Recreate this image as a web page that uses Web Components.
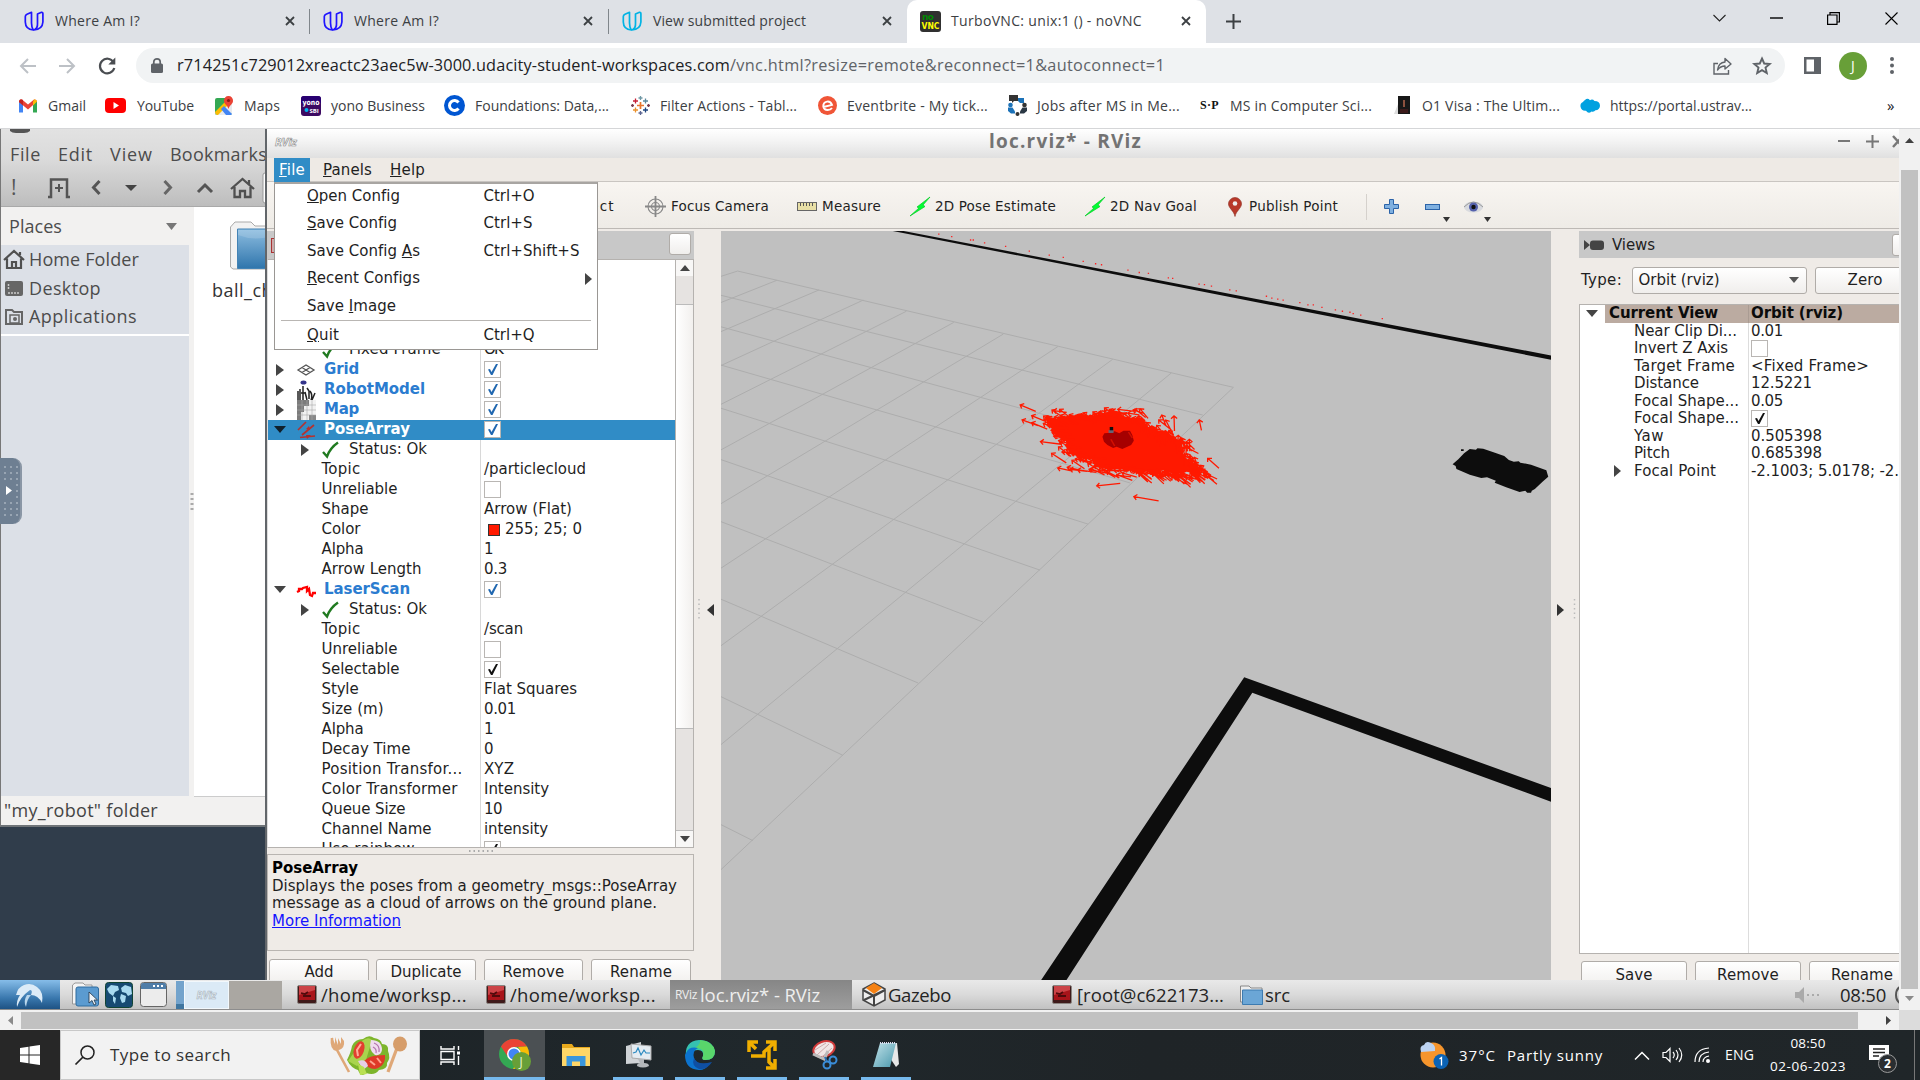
<!DOCTYPE html>
<html lang="en">
<head>
<meta charset="utf-8">
<title>TurboVNC: unix:1 () - noVNC</title>
<style>
html,body{margin:0;padding:0;width:1920px;height:1080px;overflow:hidden}
body{font-family:"Open Sans","Noto Sans",sans-serif;font-size:14px;color:#3c4043}
</style>
</head>
<body>
<app-screen></app-screen>
<script>
const BASE = `*{box-sizing:border-box}
:host{display:block;flex:none}
.c{display:flex;flex:none;align-items:center}
.row{display:flex;align-items:center}
svg{display:block;flex:none;overflow:visible}`;
const def = (name, css, html, after) => customElements.define(name, class extends HTMLElement {
  connectedCallback() {
    if (this.shadowRoot) return;
    const t = document.createElement('template');
    t.innerHTML = `<style>${BASE}${css}</style>${typeof html === 'function' ? html(this) : html}`;
    this.attachShadow({ mode: 'open' }).append(t.content.cloneNode(true));
    if (after) after(this);
  }
});
/* Lays items [start, width, markup] along a row, turning gaps into margins. */
const flow = (items, c = 0) => items.map(([x, w, h]) => {
  const m = x - c; c = x + w;
  return `<span class="c" style="margin-left:${m}px;width:${w}px">${h}</span>`;
}).join('');
const t = (x, w, s, css = '') => [x, w, `<fit-text w="${w}" style="${css}">${s}</fit-text>`];
const svg = (w, h, body, vb, css = '') => `<svg width="${w}" height="${h}" viewBox="${vb || `0 0 ${w} ${h}`}" style="${css}">${body}</svg>`;
const ic = (x, w, h, body, vb, css) => [x, w, svg(w, h, body, vb, css)];

/* Text whose letter spacing is tuned so that it fills the width w. */
def('fit-text', `:host{display:inline-block;white-space:nowrap;line-height:1.25;overflow:visible}span{display:inline-block}`,
  '<span><slot></slot></span>', el => {
    const w = +el.getAttribute('w');
    if (!w) return;
    el.style.width = w + 'px';
    const nat = el.shadowRoot.querySelector('span').getBoundingClientRect().width;
    const n = el.textContent.trim().length;
    el.style.letterSpacing = ((w - nat) / n).toFixed(3) + 'px';
  });

/* ---------- browser ---------- */
const udacity = c => `<g fill="none" stroke="${c}" stroke-width="1.7" stroke-linejoin="round"><path d="M7.5 12V1.3L3 3.2Q1.3 4 1.3 5.5V11q.2 7.5 8 8Q7.5 16 7.5 12Z"/><path d="M13.5 12V3l4-1.7q1.4-.2 1.4 1.4V11q-.5 7.5-9 8 4-1.2 3.6-7Z"/></g>`;
const cross = `<path d="M1 1L9 9M9 1L1 9" stroke="#3c4043" stroke-width="1.8"/>`;
def('browser-tabs', `:host{height:43px;background:#dee1e6}
.row{height:43px;align-items:stretch}
.tab{display:flex;align-items:center;flex:none;height:43px;padding-bottom:1px}
.tab.on{background:#fff;border-radius:10px 10px 0 0;height:43px}
.sep{width:1px;height:25px;background:#80868b;align-self:center;flex:none}`,
  `<div class="row">
  <div class="tab" style="width:309px">${flow([ic(24,21,20,udacity('#2015ff')),t(55,85,'Where Am I?'),ic(285,10,10,cross)])}</div><div class="sep"></div>
  <div class="tab" style="width:298px">${flow([ic(323,21,20,udacity('#2015ff')),t(354,85,'Where Am I?'),ic(583,10,10,cross)],310)}</div><div class="sep"></div>
  <div class="tab" style="width:298px">${flow([ic(622,21,20,udacity('#02b3e4')),t(653,153,'View submitted project'),ic(882,10,10,cross)],609)}</div>
  <div class="tab on" style="width:299px">${flow([ic(920,21,21,`<rect width="21" height="21" rx="3" fill="#303030"/><text x="2" y="9" font-family="DejaVu Sans" font-weight="bold" font-size="9" fill="#008a00" textLength="12">no</text><text x="1.5" y="17.5" font-family="DejaVu Sans" font-weight="bold" font-size="8" fill="#ffff00" textLength="18" lengthAdjust="spacingAndGlyphs">VNC</text>`),t(951,191,'TurboVNC: unix:1 () - noVNC'),ic(1181,10,10,cross)],907)}</div>
  <div class="tab">${flow([ic(1226,15,15,'<path d="M7.5 0V15M0 7.5H15" stroke="#3c4043" stroke-width="2"/>'),
   ic(1713,13,8,'<path d="M.5 1L6.5 7L12.5 1" fill="none" stroke="#222" stroke-width="1.1"/>','', 'margin-bottom:6px'),
   ic(1770,13,2,'<path d="M0 1H13" stroke="#000" stroke-width="1.4"/>','', 'margin-bottom:6px'),
   ic(1827,13,13,'<path d="M.6 3H10V12.4H.6ZM3 3V.6H12.4V10H10" fill="none" stroke="#000" stroke-width="1.2"/>','','margin-bottom:6px'),
   ic(1885,13,13,'<path d="M.5 .5L12.5 12.5M12.5 .5L.5 12.5" stroke="#000" stroke-width="1.1"/>','','margin-bottom:6px')],1206)}</div></div>`);

def('browser-toolbar', `:host{height:43px;background:#fff}
.row{height:45px;padding-top:0}.omni{display:flex;align-items:center;width:1649px;height:35px;border-radius:18px;background:#f1f3f4;flex:none;margin-left:18px}
.j{width:28px;height:28px;border-radius:50%;background:#689f38;color:#fff;display:grid;place-items:center;font-size:14px}`,
  `<div class="row">${flow([
    ic(19,17,16,'<path d="M17 8H2M9 1L2 8l7 7" fill="none" stroke="#bdc1c6" stroke-width="2"/>'),
    ic(59,17,16,'<path d="M0 8H15M8 1l7 7-7 7" fill="none" stroke="#bdc1c6" stroke-width="2"/>'),
    ic(98,19,18,'<path d="M15.5 5.2A7.3 7.3 0 1 0 16.3 11" fill="none" stroke="#4a4d51" stroke-width="2.2"/><path d="M17.3 .5V7.5H10.3Z" fill="#4a4d51"/>')])}
   <div class="omni" style="margin-left:19px">${flow([
    ic(151,12,15,'<rect y="5.5" width="12" height="9.5" rx="1.5" fill="#5f6368"/><path d="M2.8 6V3.8a3.2 3 0 0 1 6.4 0V6" fill="none" stroke="#5f6368" stroke-width="1.7"/>'),
    t(177,553,'r714251c729012xreactc23aec5w-3000.udacity-student-workspaces.com','color:#202124;font-size:16.3px'),
    t(730,435,'/vnc.html?resize=remote&amp;reconnect=1&amp;autoconnect=1','color:#5f6368;font-size:16.3px'),
    ic(1713,19,18,'<path d="M5 6.5H1V17H15.5V13" fill="none" stroke="#5f6368" stroke-width="1.4"/><path d="M4.5 13Q5.5 5.5 12 5V1.5L18 7 12 12V9Q7.500 9 4.500 13Z" fill="none" stroke="#5f6368" stroke-width="1.4" stroke-linejoin="round"/>'),
    ic(1753,18,18,'<path d="M9 1.5l2.2 5 5.5.5-4.2 3.6 1.3 5.4L9 13.2 4.200 16 5.500 10.600 1.300 7l5.500-.5Z" fill="none" stroke="#5f6368" stroke-width="1.9"/>')],136)}</div>
   ${flow([
    ic(1804,17,17,'<rect width="17" height="17" fill="#5f6368"/><rect x="2.500" y="2.500" width="7.500" height="12" fill="#fff"/>'),
    [1839,28,'<div class="j"><span>J</span></div>'],
    ic(1890,4,17,'<g fill="#5f6368"><circle cx="2" cy="2" r="2"/><circle cx="2" cy="8.500" r="2"/><circle cx="2" cy="15" r="2"/></g>')],1785)}
  </div>`);

const bm = (x, w, s) => t(x, w, s, 'font-size:14px');
def('bookmark-bar', `:host{height:43px;background:#fff;border-bottom:1px solid #d5d6d8}.row{height:39px}`,
  `<div class="row">${flow([
   ic(19,18,14,'<path d="M0 2V13.500H4V6Z" fill="#4285f4"/><path d="M18 2V13.500H14V6Z" fill="#34a853"/><path d="M0 2Q1 0 3 .5L9 5.500 15 .5Q17.500 0 18 2.500L9 10.500 0 3Z" fill="#ea4335"/><path d="M14 3l1-2.500q2.500-.5 3 2L14 6.500Z" fill="#fbbc04"/><path d="M0 3L4 6.500V1Q0 -1 0 3Z" fill="#c5221f"/>'), bm(48,38,'Gmail'),
   ic(105,21,15,'<rect width="21" height="15" rx="4" fill="#f00"/><path d="M8.500 4v7l5.500-3.500Z" fill="#fff"/>'), bm(137,57,'YouTube'),
   ic(215,19,19,'<rect y="2" width="17" height="17" rx="2" fill="#34a853"/><path d="M0 17L15 3l2 2v12q0 2-2 2H2Z" fill="#e8eaed"/><path d="M0 16L13 3l3 3L3 19H2q-2-1-2-3Z" fill="#fbbc04"/><path d="M9 10l8 8-1 1H11L6 13Z" fill="#4285f4"/><path d="M13.500 0a4.500 4.500 0 0 1 4.500 5c0 3-3.500 4-4.500 8-1-4-4.500-5-4.500-8a4.500 4.500 0 0 1 4.500-5Z" fill="#ea4335"/><circle cx="13.500" cy="4.500" r="1.600" fill="#8c1a11"/>'), bm(244,36,'Maps'),
   ic(301,20,20,'<rect width="20" height="20" rx="3" fill="#3c0a62"/><path d="M0 3q0-3 3-3h14q3 0 3 3v4H0Z" fill="#280071"/><text x="1.500" y="9" fill="#fff" font-family="DejaVu Sans" font-weight="bold" font-size="7.500" textLength="17" lengthAdjust="spacingAndGlyphs">yono</text><circle cx="5.500" cy="14" r="2" fill="#00b5ef"/><text x="8.500" y="16.500" fill="#fff" font-size="6" font-family="Open Sans" font-weight="bold">SBI</text>'), bm(331,94,'yono Business'),
   ic(444,21,21,'<circle cx="10.500" cy="10.500" r="10.500" fill="#0056d2"/><path d="M14.500 7.500A5 5 0 1 0 14.500 13.500" fill="none" stroke="#fff" stroke-width="3"/>'), bm(475,134,'Foundations: Data,...'),
   ic(631,19,19,'<g fill="none" stroke-width="1.300"><path d="M9.500 6v7M6 9.500h7" stroke="#e8762d" stroke-width="1.700"/><path d="M4.500 2.500v5M2 5h5" stroke="#c72037"/><path d="M14.500 2.500v5M12 5h5" stroke="#5b879b"/><path d="M4.500 11.500v5M2 14h5" stroke="#eb912c"/><path d="M14.500 11.500v5M12 14h5" stroke="#1f457e"/><path d="M9.500 0v4M7.500 2h4" stroke="#7099a6"/><path d="M9.500 15v4M7.500 17h4" stroke="#5c6692"/><path d="M1.500 8v3M0 9.500h3M17.500 8v3M16 9.500h3" stroke="#7b3f50"/></g>'), bm(660,137,'Filter Actions - Tabl...'),
   ic(818,19,19,'<circle cx="9.500" cy="9.500" r="9.500" fill="#f05537"/><path d="M5.500 11L14 8.800Q12.500 5 9 5.600 5 6.500 5.300 10.500 6 14 9.700 14q2.800 0 4.300-2" fill="none" stroke="#fff" stroke-width="1.900"/>'), bm(847,141,'Eventbrite - My tick...'),
   ic(1007,21,21,'<path d="M2 0h9v6H7l-2 2V6H2Z" fill="#333"/><path d="M11 3h6v5h-4l-2-2Z" fill="#1c72b8"/><circle cx="3.500" cy="10" r="2.300" fill="#1c72b8"/><circle cx="17.500" cy="10" r="2.300" fill="#333"/><path d="M1 12.500h4.500l2.500 4v2H4L1 16Z" fill="#1c72b8"/><path d="M20 12.500h-4.500l-2.500 4v2h4l3-2.500Z" fill="#2a3744"/><circle cx="10.500" cy="19" r="2" fill="#333"/>'), bm(1037,143,'Jobs after MS in Me...'),
   t(1200,19,'S·P','font:bold 12px \'Liberation Serif\',serif;color:#111'), bm(1230,142,'MS in Computer Sci...'),
   ic(1394,16,19,'<path d="M4 0h12v18H4Z" fill="#181818"/><path d="M0 18L4 8V18Z" fill="#ddd"/><path d="M10 4v7" stroke="#b5654b" stroke-width="1.500"/><path d="M6 13h8v4H6Z" fill="#3c1a1a"/>'), bm(1422,138,'O1 Visa : The Ultim...'),
   ic(1580,20,15,'<path d="M5 2Q7.500-.5 10 2.200 12.500.5 14.500 3 20 3 20 8q-.5 4-4.500 4.300-1.500 2-4 1.200-3 3-5.500-.8-4.500.5-5.500-4Q0 5 3 4Q3.500 3 5 2Z" fill="#00a1e0"/>'), bm(1610,142,'https://portal.ustrav...'),
   t(1887,9,'»','font-size:15px;color:#202124')])}</div>`);

/* ---------- file manager ---------- */
const ub = 'font-size:18px;color:#4c4c4c';
def('file-manager', `:host{width:265px;height:698px;background:#f2f1f0;overflow:hidden;border-left:1px solid #777;position:relative;border-bottom:2px solid #6f7478}
.top{height:78px;background:linear-gradient(#e2e2e2,#dadada 40%,#bdbdbd);border-bottom:1px solid #a9a9a9}
.title{height:9px}.menu{height:33px}.tools{height:33px;align-items:center}
.body{display:flex;height:590px}.side{width:188px;flex:none}.places{height:38px}.list{background:#dce0e7;height:551px}
.item{height:29px}.rule{height:2px;background:#fff;margin-top:3px}.split{width:8px;display:flex;align-items:center;padding:0 0 0 1px}
.main{flex:1;background:#fff;border-bottom:1px solid #ccc;padding-top:14px}
.status{height:26px}`,
 `<div class="top"><div class="row title">${flow([ic(9,20,9,'<path d="M0 0H20V2Q18 4 14 4H6Q2 4 0 2Z" fill="#555"/>')])}</div>
 <div class="row menu">${flow([t(9,31,'File',ub),t(57,35,'Edit',ub),t(109,43,'View',ub),t(169,97,'Bookmarks',ub)])}</div>
 <div class="row tools">${flow([
  t(10,6,'!','font-size:21px;font-weight:500;color:#555'),
  ic(47,22,20,'<path d="M0 19H3V1.500H19V19H22" fill="none" stroke="#555" stroke-width="2.500"/><path d="M11 6v8M7 10h8" stroke="#555" stroke-width="2"/>'),
  ic(91,8,13,'<path d="M7.500 0L1.500 6.500 7.500 13" fill="none" stroke="#555" stroke-width="3"/>'),
  ic(124,12,6,'<path d="M0 0H12L6 6Z" fill="#444"/>'),
  ic(163,8,13,'<path d="M.5 0L6.500 6.500 .5 13" fill="none" stroke="#666" stroke-width="3"/>'),
  ic(196,16,10,'<path d="M1 9L8 2 15 9" fill="none" stroke="#555" stroke-width="3"/>'),
  ic(230,23,20,'<path d="M0 11L11.500 1 23 11M3.500 9V19H9V13h5v6h5.500V9M18 6V2" fill="none" stroke="#505050" stroke-width="2.300"/>'),
  ic(261,6,32,'<path d="M6 1H3Q1 1 1 3V29Q1 31 3 31H6" fill="#fff" stroke="#999"/>')])}</div></div>
 <div class="body"><div class="side"><div class="row places">${flow([t(8,53,'Places',ub),ic(165,11,7,'<path d="M0 0H11L5.500 7Z" fill="#777"/>')])}</div>
 <div class="list">
  <div class="row item">${flow([ic(3,20,19,'<path d="M0 10L10 1 20 10M3 8.500V18H17V8.500M8 18V12h4v6M16 5V2" fill="none" stroke="#505050" stroke-width="2.200"/>'),t(28,110,'Home Folder',ub)])}</div>
  <div class="row item" style="height:28px">${flow([ic(4,18,15,'<rect width="18" height="15" rx="2" fill="#666"/><path d="M3.500 3v6M3 12h12" stroke="#ccc" stroke-width="1.500" stroke-dasharray="2 1"/>'),t(28,72,'Desktop',ub)])}</div>
  <div class="row item">${flow([ic(4,18,16,'<path d="M1 15V1H7l2 2h8V15Z" fill="none" stroke="#666" stroke-width="2"/><rect x="5" y="6" width="9" height="8" fill="none" stroke="#666" stroke-width="1.500"/><circle cx="10" cy="10" r="2" fill="#666"/>'),t(28,108,'Applications',ub)])}</div>
  <div class="rule"></div></div></div>
 <div class="split">${svg(4,18,'<path d="M2 0V18" stroke="#aaa" stroke-width="3" stroke-dasharray="2 3"/>')}</div>
 <div class="main">${svg(50,54,'<defs><linearGradient id="f" x2="0" y2="1"><stop stop-color="#8dbde0"/><stop offset="1" stop-color="#2f75ac"/></linearGradient></defs><path d="M.5 46V6L5 1H21L25 5H50V48H3Z" fill="#f2f2f2" stroke="#aaa"/><path d="M7.500 8H50V47.500H7.500Z" fill="url(#f)" stroke="#4383b5"/><path d="M8 14q20 8 42-2V9H8Z" fill="#fff" opacity=".15"/>','','margin-left:36px')}
 <div class="row" style="height:30px">${flow([t(18,61,'ball_ch','font-size:18px;color:#333')])}</div></div></div>
 <div class="row status">${flow([t(3,154,'"my_robot" folder','font-size:18px;color:#444')])}</div>`);
def('vnc-handle', `:host{width:22px;height:66px;background:#6e7f92;border-radius:0 9px 9px 0;border-right:2px solid #8a96a5}.row{height:66px;justify-content:center}`,
 `<div class="row">${svg(18,54,'<g stroke="#98a5b3" stroke-width="2" stroke-dasharray="2 4"><path d="M4 2V54M10 2V54M16 2V54"/></g><rect x="3" y="18" width="12" height="18" fill="#6e7f92"/><path d="M5 22V31L11 26.500Z" fill="#fff"/>')}</div>`);

/* ---------- rviz ---------- */
const dj = 'font-family:\'DejaVu Sans\',sans-serif;';
const q = dj + 'font-size:15px;color:#1f1f1f';
const qs = dj + 'font-size:13.500px;color:#1f1f1f';
const tri = (c='#444') => svg(8,12,`<path d="M0 0V12L8 6Z" fill="${c}"/>`);
const triD = (c='#444') => svg(12,7,`<path d="M0 0H12L6 7Z" fill="${c}"/>`);
const box = c => svg(17,17,`<rect x=".5" y=".5" width="16" height="16" fill="#fff" stroke="#b9b6b3"/>${c ? `<path d="M4 8.500L6 8l1.500 3L12 3h2L8.500 14H7Z" fill="${c}"/>` : ''}`);
const green = svg(17,16,'<path d="M1 10L5 14.500Q8 6 16 .5" fill="none" stroke="#207a20" stroke-width="2.400"/>');
const icons = {
 Grid: svg(18,12,'<path d="M1 6L9 1 17 6 9 11ZM5 3.500L13 8.500M13 3.500L5 8.500" fill="none" stroke="#555" stroke-width="1.300"/>','','margin-left:1px'),
 RobotModel: svg(19,20,'<ellipse cx="6.500" cy="2.500" rx="3" ry="2" fill="#33338a"/><path d="M1 20V11M3 9V20M6 6V20M8 12l2 8M10 8l2 3v8M13 11q3 4 1 9M18 13l-3 7M4 13h4" stroke="#222" stroke-width="1.500" fill="none"/>','','margin-left:1px'),
 Map: svg(19,20,'<rect width="19" height="20" fill="#f2f2f2"/><path d="M0 0H12V6H7V12H4V20H0Z" fill="#7c7c7c"/><path d="M12 15h7v5h-7Z" fill="#888"/><path d="M0 5H19M0 10H19M0 15H19M5 0V20M10 0V20M15 0V20" stroke="#aaa" stroke-width=".6"/>','','margin-left:1px'),
 PoseArray: svg(19,18,'<g stroke="#b5322f" stroke-width="1.700" fill="#b5322f"><path d="M1 9L9 1M5 14L17 4M3 16.500L18 15"/><path d="M9 8l4 1-1-4ZM10 18l4-4-5 0Z" stroke="none"/></g>','','margin-left:1px'),
 LaserScan: svg(19,12,'<path d="M0 7L2 6 2 4 5 4 6 3 10 2 10 6 12 4 13 10 15 11 16 8 19 8" fill="none" stroke="#f00" stroke-width="2.300"/>','','margin:3px 0 0 1px')
};
const B='#2067b0', K='#111';
const rows = [
 ['s','Fixed Frame','OK',92,18],['d','Grid',B,35],['d','RobotModel',B,101],['d','Map',B,35],['sel','PoseArray',B,86],
 ['s','Status: Ok','',78],['p','Topic','/particlecloud',39,102],['p','Unreliable','',76,0,1],['p','Shape','Arrow (Flat)',47,88],['p','Color','255; 25; 0',39,77,'sw'],
 ['p','Alpha','1',42,9],['p','Arrow Length','0.3',100,23],['o','LaserScan',B,86],['s','Status: Ok','',78],['p','Topic','/scan',39,39],['p','Unreliable','',76,0,1],
 ['p','Selectable','',78,0,K],['p','Style','Flat Squares',37,93],['p','Size (m)','0.01',62,32],['p','Alpha','1',42,9],['p','Decay Time','0',89,9],
 ['p','Position Transfor...','XYZ',141,30],['p','Color Transformer','Intensity',136,65],['p','Queue Size','10',84,18],['p','Channel Name','intensity',110,64],['p','Use rainbow','',93,0,K]];
const treeRow = r => {
  const [k,a,b,w,vw,x] = r; let items, cls='';
  if (k==='d'||k==='o'||k==='sel') {
    const on = k==='sel'; if (on) cls=' sel';
    items = [k==='d' ? [276,12,tri()] : [274,14,triD(on?'#10202c':'#444')],[296,20,icons[a]],t(324,w,a,dj+`font-size:15px;font-weight:bold;color:${on?'#fff':'#2b7cd0'}`),[484,17,box(b)]];
  } else if (k==='s') {
    items = (a==='Fixed Frame'?[]:[[301,12,tri()]]).concat([[322,18,green],t(349,w,a,q)]);
    if (b) items.push(t(484,vw,b,q));
  } else {
    items = [t(321.5,w,a,q)];
    if (x==='sw') items.push([488,12,svg(12,12,'<rect x=".5" y=".5" width="11" height="11" fill="#ff1900" stroke="#333"/>')],t(505,vw,b,q));
    else if (x) items.push([484,17,box(x===1?'':x)]);
    else items.push(t(484,vw,b,q));
  }
  return `<div class="row tr${cls}">${flow(items,268)}</div>`;
};
def('push-button', `:host{border:1px solid #b0aca8;border-radius:3px;background:linear-gradient(#fff,#f0eeec);height:27px;display:flex;align-items:center;justify-content:center}`, '<slot></slot>');
const btn = (x,w,tw,s,h=27) => [x,w,`<push-button style="width:${w}px;height:${h}px"><fit-text w="${tw}" style="${q}">${s}</fit-text></push-button>`];

def('displays-panel', `:host{width:427px;height:749px;overflow:hidden}
.head{height:28px;background:#c8c8c8;align-items:center}
.tree{height:589px;border:1px solid #b5b2af;border-left-color:#ddd;display:flex;background:#fff;margin-top:0}
.rows{width:407px;overflow:hidden;padding-top:79.500px;background:linear-gradient(90deg,transparent 212px,#d8d8d8 212px,#d8d8d8 213px,transparent 213px);flex:none}
.tr{height:20px}.sel{background:#308cc6}
.sb{flex:1;display:flex;flex-direction:column;border-left:1px solid #b5b2af;background:#e6e3e1}
.b{height:16px;display:grid;place-items:center;background:#f8f7f6}.th{height:425px;margin-top:28px;background:linear-gradient(90deg,#fff,#f2f0ee);border:solid #bbb;border-width:1px 0}
.dots{height:6px;justify-content:center}.info{height:97px;border:1px solid #b9b5b1;padding:3px 0 0 4px}
.info div{height:17.500px}.btns{padding-top:8px}`,
 `<div class="row head">${flow([ic(4,6,15,'<rect x=".5" y=".5" width="12" height="14" fill="#caa" stroke="#a33"/>'),[402,22,'<push-button style="width:22px;height:22px;margin-top:-2px"></push-button>']])}</div>
 <div class="tree"><div class="rows">${rows.map(treeRow).join('')}</div>
 <div class="sb"><div class="b">${svg(10,6,'<path d="M0 6H10L5 0Z" fill="#444"/>')}</div><div class="th"></div><div style="flex:1"></div><div class="b" style="height:17px;border-top:1px solid #bbb">${svg(10,6,'<path d="M0 0H10L5 6Z" fill="#444"/>')}</div></div></div>
 <div class="row dots">${svg(24,2,'<path d="M0 1H24" stroke="#aaa" stroke-width="2" stroke-dasharray="1.500 3"/>')}</div>
 <div class="info"><div><fit-text w="86" style="${dj}font-size:15px;font-weight:bold;color:#000">PoseArray</fit-text></div><div><fit-text w="405" style="${q}">Displays the poses from a geometry_msgs::PoseArray</fit-text></div><div><fit-text w="385" style="${q}">message as a cloud of arrows on the ground plane.</fit-text></div><div><fit-text w="129" style="${q};color:#1414ff"><u>More Information</u></fit-text></div></div>
 <div class="row btns">${flow([btn(2,100,29,'Add'),btn(109,100,71,'Duplicate'),btn(217,99,62,'Remove'),btn(324,100,62,'Rename')])}</div>`);

/* The 3D viewport: ground grid, walls, laser hits and the particle cloud. */
function cloud() {
  let s = 7; const R = () => (s = (s * 16807) % 2147483647) / 2147483647;
  const arrow = (x, y, a, L) => {
    const c = Math.cos(a), n = Math.sin(a);
    const p = (u, v) => `${(x - u * c + v * n).toFixed(1)} ${(y - u * n - v * c).toFixed(1)}`;
    return `M${p(L,0)}L${p(0,0)}M${p(8,8)}L${p(0,0)}L${p(8,-8)}`;
  };
  const poly = [[175,140],[195,152],[235,135],[290,140],[340,125],[380,145],[420,150],[450,180],[490,185],[520,215],[535,260],[560,285],[580,300],[570,312],[540,305],[510,315],[480,300],[430,305],[400,298],[340,298],[300,285],[290,265],[260,265],[230,240],[225,215],[200,190],[175,160]];
  let d = '';
  poly.forEach((p, i) => {
    const r = poly[(i + 1) % poly.length], len = Math.hypot(r[0]-p[0], r[1]-p[1]);
    for (let k = 0; k < len / 5; k++) {
      const f = R(), x = p[0] + (r[0]-p[0])*f, y = p[1] + (r[1]-p[1])*f;
      const ang = x > 400 && y < 280 ? -2.3 + R()*.9 : x > 400 ? -2.75 + R()*.5 : -3.15 + R()*.75;
      const off = R()*R()*34 - 4;
      const dx = x - 370, dy = y - 220, m = Math.hypot(dx, dy);
      d += arrow(x + dx/m*off, y + dy/m*off*.7, ang, 28 + R()*18);
    }
  });
  [[105,105,-2.7,45],[110,150,-2.75,45],[135,158,-2.7,45],[135,137,-2.7,40],[158,215,-3,55],[187,250,-2.5,48],[203,294,-2.9,40],[228,292,-2.9,45],[235,298,-3,45],[188,120,-2.5,40],[192,122,-3,35],[208,118,-2.4,40],[345,122,-2.9,40],[360,118,-3,40],[405,117,-2.4,38],[418,116,-2.2,36],[400,120,-2.8,32],[475,135,-1.9,35],[467,150,-2.4,45],[507,138,-1.6,45],[485,150,-2,50],[573,150,-1.75,32],[547,208,-1.6,36],[595,265,-2.35,42],[540,232,-2.6,36],[560,262,-1.9,45],[575,286,-2.2,44],[305,348,3.02,62],[402,380,-2.95,66],[415,308,-2.4,46],[450,308,-2.6,44],[500,318,-2.6,48],[535,320,-2.9,40],[255,300,-3,50],[285,298,-2.9,50],[310,300,-3.1,40]].forEach(a => d += arrow(...a));
  return `<polygon points="${poly.join(' ')}" fill="#ff1900"/><path d="${d}" fill="none" stroke="#ff1900" stroke-width="1.300" vector-effect="non-scaling-stroke"/>`;
}
const top_ = [[42,95],[115,114],[193,134],[275,155],[355,178],[443,201],[535,225],[636,251],[738,277],[847,305],[962,335]];
const leftB = [106,160,220,290,370,464,575,708,868,1072,1330];
const A = [[905,392,145],[838,460,210],[770,532,289],[692,617,378],[603,712,484],[497,819,612],[377,945,772],[237,1094,973],[70,1270,1237]];
const grid = 'M42 95L962 335' + top_.map((p,i)=>`M${p[0]} ${p[1]}L11 ${leftB[i]}`).join('') + A.map(a=>`M${a[0]} ${a[1]}L11 ${a[2]}`).join('');
const hits = [415,19,439,24,474,31,479,31,500,37,539,44,583,54,620,62,646,67,683,75,706,80,717,82,766,93,787,98,804,100,841,109,849,110,898,122,908,123,921,126,955,134,967,136,1023,147,1033,151,1044,153,1054,155,1085,160,1100,165,1110,165,1126,170,1151,175,1164,178,1178,180,1184,183,1198,186,1238,193];
let hitD=''; for (let i=0;i<hits.length;i+=2) hitD += `M${hits[i]-1} ${hits[i+1]}h2.500`;
def('scene-view', `:host{width:830px;height:749px;background:#c0c0c0;overflow:hidden}svg{overflow:hidden}`,
 `<svg width="830" height="749" viewBox="11.1 12.4 1540.2 1545.2" preserveAspectRatio="none">
 <path d="${grid}" fill="none" stroke="#adadad" stroke-width="1" vector-effect="non-scaling-stroke"/>
 <g fill="#0d0d0d"><polygon points="328,12 348,12 1552,269.500 1552,278"/><polygon points="982,933 1552,1162 1552,1190 997,965 652,1558 605,1558"/></g>
 <path d="${hitD}" stroke="#f22" stroke-width="1.300" vector-effect="non-scaling-stroke"/>
 <g transform="translate(491.700 299.100) scale(.7101 .6877)">${cloud()}
 <polygon points="320,200 325,190 340,188 352,184 364,190 375,182 392,182 398,195 402,212 395,225 372,237 357,230 348,234 333,225 324,215" fill="#a60000"/><path d="M342 208l10 20M388 186l10 18" stroke="#d41000" stroke-width="4"/><rect x="336" y="180" width="13" height="9" fill="#667"/><rect x="339" y="171" width="9" height="10" fill="#111"/>
 <path d="M1235 283L1250 268 1265 250 1280 237 1296 239 1300 235 1315 236 1340 246 1370 258 1382 270 1395 275 1408 274 1412 278 1440 284 1480 301 1485 320 1470 335 1450 357 1442 362 1440 368 1430 368 1425 362 1410 366 1375 352 1345 338 1348 332 1325 322 1310 324 1280 314 1245 297 1243 288ZM1257 238h7v5h-7Z" fill="#0d0d0d"/></g></svg>`);

def('dock-strip', `:host{width:28px;display:flex;align-items:center;justify-content:center;height:749px;padding-top:9px}`,
 el => el.getAttribute('dir') === 'l'
  ? svg(27,22,'<path d="M5 0V22" stroke="#bbb" stroke-width="1.500" stroke-dasharray="1.500 3"/><path d="M20 5V17L13 11Z" fill="#333"/>')
  : svg(28,22,'<path d="M6 5V17L13 11Z" fill="#333"/><path d="M23.500 0V22" stroke="#bbb" stroke-width="1.500" stroke-dasharray="1.500 3"/>'));

const vr = [['Near Clip Di...','0.01',103,32],['Invert Z Axis','',94,0,''],['Target Frame','<Fixed Frame>',101,118],['Distance','12.5221',65,61],['Focal Shape...','0.05',105,32],['Focal Shape...','',105,0,K],['Yaw','0.505398',30,71],['Pitch','0.685398',36,71],['Focal Point','-2.1003; 5.0178; -2.',82,148]];
def('views-panel', `:host{width:320px;height:749px;overflow:hidden}
.head{height:27px;background:#c8c8c8}.type{height:42px;padding-top:2px}.combo{width:175px;height:27px;border:1px solid #b0aca8;border-radius:3px;background:linear-gradient(#fff,#f0eeec);display:flex;align-items:center}
.tree{height:650px;margin-top:4px;background:#fff linear-gradient(90deg,transparent 168px,#ddd 168px,#ddd 169px,transparent 169px);border:1px solid #b5b2af;border-right:0}
.h{height:17.500px;background:linear-gradient(90deg,#fff 25px,#bbaba1 25px,#bbaba1 168px,#aa9c93 168px,#aa9c93 169px,#bbaba1 169px)}.r{height:17.500px}.btns{padding-top:7px}`,
 `<div class="row head">${flow([ic(5,20,12,'<path d="M0 1L6 6 0 11ZM9 1.500h8q3 0 3 3V8q0 3-3 3H9q-3 0-3-3V4.500q0-3 3-3Z" fill="#444"/>'),t(33,43,'Views',q+';margin-top:1px'),[313,22,'<push-button style="width:22px;height:22px"></push-button>']])}</div>
 <div class="row type">${flow([t(2,41,'Type:',q),[52.5,175.5,`<div class="combo">${flow([t(6,81,'Orbit (rviz)',q),ic(156,10,6,'<path d="M0 0H10L5 6Z" fill="#555"/>')])}</div>`],[236,100,`<push-button style="width:100px;height:27px"><fit-text w="35" style="${q}">Zero</fit-text></push-button>`]])}</div>
 <div class="tree"><div class="row h">${flow([[7,12,svg(12,7,'<path d="M0 0H12L6 7Z" fill="#444"/>')],t(30,109,'Current View',dj+'font-size:15px;font-weight:bold;color:#0b0b0b'),t(172,92,'Orbit (rviz)',dj+'font-size:15px;font-weight:bold;color:#0b0b0b')],1)}</div>
 ${vr.map(r => `<div class="row r">${flow([].concat(r[0]==='Focal Point'?[[35,8,svg(7,12,'<path d="M0 0V12L7 6Z" fill="#444"/>')]]:[],[t(55,r[2],r[0],q)], r[1]?[t(172,r[3],r[1].replace('<','&lt;'),q)]:[[172,17,box(r[4])]]),1)}</div>`).join('')}</div>
 <div class="row btns">${flow([btn(2,106,37,'Save',28),btn(116,106,62,'Remove',28),btn(230,106,62,'Rename',28)])}</div>`);

def('file-menu', `:host{width:324px;height:168px;background:#fff;border:1px solid #9a9794;border-top:2px solid #a8a5a2}
.r{height:27.500px}.f{height:25px;margin-bottom:1px}.sep{height:1px;background:#b9b6b3;margin:0 6px 0 6px}`,
 `${[['<u>O</u>pen Config',93,'Ctrl+O',51],['<u>S</u>ave Config',90,'Ctrl+S',49],['Save Config <u>A</u>s',113,'Ctrl+Shift+S',96],['<u>R</u>ecent Configs',113],['Save <u>I</u>mage',89]].map((r,i)=>`<div class="row r${i?'':' f'}">${flow([t(32,r[1],r[0],q)].concat(r[2]?[t(208.5,r[3],r[2],q)]:[], i===3?[[310,8,svg(7,12,'<path d="M0 0V12L7 6Z" fill="#444"/>')]]:[]))}</div>`).join('')}
 <div class="sep" style="margin-top:0"></div><div class="row r" style="height:29px">${flow([t(32,32,'<u>Q</u>uit',q),t(208.5,51,'Ctrl+Q',q)])}</div>`);

const arrow2d = '<path d="M0 19L9 11 7 10 20 0 13 8 15 9.500Z" fill="#0f3" stroke="#0c2" stroke-width=".7"/>';
def('rviz-window', `:host{width:1634px;height:851px;background:#efebe7;border-left:2px solid #62666a;overflow:hidden;position:relative}
.title{height:29px;background:linear-gradient(#fff,#f4f4f4 40%,#e0e0e0)}
.menu{height:24px;background:#eeeae5;border-bottom:1px solid #c9c5c1;padding-top:1px}.menu .on{background:#308cc6;height:24px;width:36px;display:flex;align-items:center;padding-left:5px}
.tools{height:47px;background:linear-gradient(#f8f5f1,#eeebe6);border-bottom:1px solid #bdb9b5;padding-top:3px}
.body{display:flex;padding-top:2px}file-menu{position:absolute;left:7px;top:53px}`,
 `<div class="row title">${flow([
   t(275,22,'RViz','font:italic bold 11px \'Open Sans\';color:#fff;-webkit-text-stroke:.6px #888;margin-top:-4px'),
   t(989,153,'loc.rviz* - RViz','font-size:19px;font-weight:bold;color:#737373;margin-top:-4px'),
   ic(1838,12,2,'<path d="M0 1H12" stroke="#777" stroke-width="2"/>','','margin-top:-5px'),
   ic(1866,13,13,'<path d="M0 6.500H13M6.500 0V13" stroke="#777" stroke-width="2"/>','','margin-top:-5px'),
   ic(1893,10,12,'<path d="M0 0L10 11M10 0L0 11" stroke="#777" stroke-width="2.400"/>','','margin-top:-4px')],267)}</div>
 <div class="row menu">${flow([[274,36,`<div class="on"><fit-text w="26" style="${dj}font-size:15px;color:#fff"><u>F</u>ile</fit-text></div>`],t(323,49,'<u>P</u>anels',q),t(390,35,'<u>H</u>elp',q)],267)}</div>
 <div class="row tools">${flow([
   t(590,25,'ect',qs),
   ic(645,21,21,'<g fill="none" stroke="#888" stroke-width="1.100"><circle cx="10.500" cy="10.500" r="7.500"/><circle cx="10.500" cy="10.500" r="4"/><path d="M10.500 0V21M0 10.500H21" stroke-width="1.800"/></g>'), t(671,98,'Focus Camera',qs),
   ic(797,20,9,'<rect x=".5" y=".5" width="19" height="8" fill="#e8dfa6" stroke="#666"/><path d="M3.500 1V4M6.500 1V4M9.500 1V4M12.500 1V4M15.500 1V4" stroke="#555"/>'), t(822,59,'Measure',qs),
   ic(910,20,19,arrow2d), t(935,121,'2D Pose Estimate',qs),
   ic(1085,20,19,arrow2d), t(1110,87,'2D Nav Goal',qs),
   ic(1228,14,20,'<path d="M7 .5a6.500 6.500 0 0 1 6.500 6.500C13.500 11 8 14 7 19.500 6 14 .5 11 .5 7A6.500 6.500 0 0 1 7 .5Z" fill="#b8392a" stroke="#8c2c20" stroke-width=".6"/><circle cx="7" cy="6.500" r="2.300" fill="#eee"/>'), t(1249,89,'Publish Point',qs),
   ic(1366,1,26,'<path d="M.5 0V26" stroke="#d5d1cc"/>'),
   ic(1384,15,15,'<path d="M5.500 .5h4v5h5v4h-5v5h-4v-5h-5v-4h5Z" fill="#7fb0e0" stroke="#2b63a8"/>'),
   ic(1425,15,6,'<rect x=".5" y=".5" width="14" height="5" fill="#7fb0e0" stroke="#2b63a8"/>'),
   ic(1443,7,5,'<path d="M0 0H7L3.500 5Z" fill="#333"/>','','margin-top:25px'),
   ic(1464,19,12,'<ellipse cx="9.500" cy="6" rx="9.500" ry="5.500" fill="#d8dade"/><path d="M0 6Q9.500-4 19 6" fill="none" stroke="#999"/><circle cx="9.500" cy="6" r="4.500" fill="#5562ac"/><circle cx="9.500" cy="6" r="2.200" fill="#111"/>'),
   ic(1484,7,5,'<path d="M0 0H7L3.500 5Z" fill="#333"/>','','margin-top:25px')],267)}</div>
 <div class="body"><displays-panel></displays-panel><dock-strip dir="l" style="width:27px"></dock-strip><scene-view></scene-view><dock-strip dir="r"></dock-strip><views-panel></views-panel></div>
 <file-menu></file-menu>`);

/* ---------- remote desktop panel ---------- */
const lx = 'font-family:\'Open Sans\';font-weight:500;font-size:18.500px;color:#242424';
const term = '<rect x=".5" y=".5" width="19" height="18" rx="1.500" fill="#3e1a1a" stroke="#8a8480"/><path d="M2 1H18V15H2Z" fill="#a8141a"/><path d="M2 1H18V5L2 10Z" fill="#cc4448"/><path d="M4 8l4 1 3-2M6 11h8" stroke="#500a0c" stroke-width="1.800" fill="none"/>';
def('lx-panel', `:host{height:30px;background:linear-gradient(#e9e9e9,#dadada 50%,#c2c2c2);border-bottom:1px solid #8d8d8d;overflow:hidden}
.row{height:29px}.start{width:60px;height:30px;background:linear-gradient(#86bde9,#3a78ae 60%,#1c4f80);display:grid;place-items:center}
.pg{height:28px;width:106px;background:#aaa7a2;display:flex}.pg i{width:8px;background:#73a3cc;border-bottom:5px solid #3f76a0;flex:none}.pg b{width:45px;background:#dbeaf6;border:1px solid #f2f8fc;display:grid;place-items:center;flex:none}
.act{width:182px;height:30px;background:linear-gradient(#868686,#9e9e9e);display:flex;align-items:center}`,
 `<div class="row">${flow([
  [0,60,`<div class="start">${svg(28,24,'<path d="M0 12Q2 4 8 2 15-1 21 4 28 9 26 20 22 12 15 12 17 7 14 7 4 14 1 24 0 18 4 12Z" fill="#dcebf7"/><path d="M15 12Q11 16 10 24 7 18 11 12Z" fill="#b9d6ec"/>')}</div>`],
  ic(72,27,25,'<path d="M.5 22V3L3 1H11L13 3H20V22Z" fill="#f4f4f4" stroke="#999"/><rect x="4" y="5" width="22.500" height="19" rx="2" fill="#5b9bd0" stroke="#2f6c9f"/><path d="M17 10V21L20 18.500 22 23 24 22 22 18H25.500Z" fill="#eef4f8" stroke="#234" stroke-width=".8"/>'),
  ic(105,28,26,'<rect x=".5" y=".5" width="27" height="25" rx="3" fill="#164a72" stroke="#143"/><path d="M2 7l4-4 7 1 1 4-4 2-2 4-4-3ZM16 6l4-3 6 2 1 7-4 2-2-3-4-1ZM16 12l5 2-1 6-3 1-2-5ZM8 14l3 2-1 6-2-3Z" fill="#a8daf0"/>'),
  ic(140,27,25,'<rect x=".5" y=".5" width="26" height="24" rx="3" fill="#ececec" stroke="#666"/><path d="M1 3q0-2 2-2H24q2 0 2 2V7H1Z" fill="#4f7da8"/><path d="M13 4H24" stroke="#fff" stroke-width="2" stroke-dasharray="2 2"/>'),
  [176,106,`<div class="pg"><i></i><b><fit-text w="20" style="font:italic bold 10px 'Open Sans';color:#e6eef5;-webkit-text-stroke:.6px #aab4bc">RViz</fit-text></b></div>`],
  ic(297,20,19,term), t(321,146,'/home/worksp...',lx), ic(486,20,19,term), t(510,146,'/home/worksp...',lx),
  [670,182,`<div class="act">${flow([t(5,22,'RViz','font:500 12px \'Open Sans\';color:#eee'),t(30,120,'loc.rviz* - RViz','font-family:\'Open Sans\';font-size:18.500px;color:#eee')])}</div>`],
  ic(861,26,25,'<path d="M13 1L24 7V18L13 24 2 18V7Z" fill="#eee" stroke="#444" stroke-width="1.500"/><path d="M13 1L21 6 13 12 5 6Z" fill="#f58113"/><path d="M2 8L13 14 24 8M13 14V24M3 18L22 9" stroke="#444" stroke-width="2" fill="none"/>'), t(888,63,'Gazebo',lx),
  ic(1052,20,19,term), t(1077,147,'[root@c622173...',lx),
  ic(1240,23,20,'<path d="M.5 1H9L11 3H22V17H.5Z" fill="#eee" stroke="#888"/><path d="M2.500 5H22.500V19.500H2.500Z" fill="#6ba6d6" stroke="#3d7bb0"/>'), t(1265,25,'src',lx),
  ic(1795,26,16,'<path d="M0 5H4L9 0V16L4 11H0Z" fill="#aaa"/><path d="M12 8H26" stroke="#aaa" stroke-width="2" stroke-dasharray="2 3"/>'),
  t(1840,46,'08:50',lx), ic(1895,6,18,'<path d="M7 0Q1 2 1 9t6 9" fill="none" stroke="#555" stroke-width="2"/>')])}</div>`);

/* ---------- scrollbars ---------- */
def('v-scroll', `:host{width:21px;height:881px;background:#f1f1f1;display:flex;flex-direction:column;align-items:center}
.b{height:23px;display:grid;place-items:center}.th{width:17px;height:819px;margin-top:18px;background:#c1c1c1}`,
 `<div class="b">${svg(9,5,'<path d="M0 5H9L4.500 0Z" fill="#404040"/>')}</div><div class="th"></div><div class="b" style="height:18px">${svg(9,5,'<path d="M0 0H9L4.500 5Z" fill="#8a8a8a"/>')}</div>`);
def('h-scroll', `:host{height:20px;background:#f1f1f1}.row{height:20px}.th{width:1837px;height:17px;background:#c1c1c1}.cn{width:21px;height:20px;background:#dcdcdc}`,
 `<div class="row">${flow([ic(8,5,9,'<path d="M5 0V9L0 4.500Z" fill="#8a8a8a"/>'),[21,1837,'<div class="th"></div>'],ic(1886,5,9,'<path d="M0 0V9L5 4.500Z" fill="#404040"/>'),[1899,21,'<div class="cn"></div>']])}</div>`);

/* ---------- Windows taskbar ---------- */
const salad = `<path d="M1 2Q0 13 6 14L18 36" stroke="#dfa878" stroke-width="2.600" fill="none"/><path d="M1 1V7Q2 14 8 14 14 12 13 5L10 1V8L7 2V9L4 1V8Z" fill="#dfa878"/><path d="M66 12L57 36" stroke="#dfa878" stroke-width="3.200"/><ellipse cx="69" cy="8" rx="7" ry="7.500" fill="#d69d6a"/>
<path d="M16 24Q20 16 21 10 24 3 32 3 38-2 43 2 50 3 51 8 58 8 57 15 60 22 56 27 57 33 48 34 44 40 35 37 30 42 27 34 20 32 16 24Z" fill="#7db52c"/><path d="M31 5q6-5 10-1l-6 20-9 6-9-5Z" fill="#a9d44e"/><ellipse cx="28" cy="14" rx="5" ry="9" transform="rotate(20 28 14)" fill="#e2402f"/><path d="M30 8l-4 6 1 6" stroke="#ffb09a" stroke-width="2" fill="none"/><path d="M33 26Q36 19 54 19 55 30 44 33 36 33 33 26Z" fill="#de3a28"/><path d="M39 25l5 4M46 22l4 5" stroke="#ffa48e" stroke-width="2" fill="none"/><path d="M40 4Q51 4 51 14 50 20 44 19 37 14 40 4Z" fill="#f0dcee"/><path d="M43 7q6 2 5 9M42 11q4 2 3 6" stroke="#b373ad" stroke-width="1.200" fill="none"/><path d="M27 25q8-3 10 5l-5 4Z" fill="#e7cfe6"/><path d="M27 28l6 3 3 7-7 1Z" fill="#b9e052"/>`;
const wt = 'font-size:15px;color:#fff';
def('win-taskbar', `:host{height:50px;background:linear-gradient(90deg,#1b2023,#20282c 40%,#1f2427 60%,#202629)}
.row{height:50px}.start{width:60px;height:50px;background:#272727;display:grid;place-items:center}
.search{width:360px;height:50px;background:#f2f2f2;border:1px solid #c8c8c8;display:flex;align-items:center}
.app{height:50px;display:flex;flex-direction:column;align-items:center;justify-content:center;border-bottom:3px solid #76b9ed;width:100%;padding-top:2px}.app.on{background:#4b5053}.app.no{border-color:transparent}
.clk{display:flex;flex-direction:column;align-items:center;gap:6px;width:76px;margin-top:-1px}
.nt{position:relative}.bdg{position:absolute;left:9px;top:9px;width:19px;height:19px;border-radius:50%;background:#2a2e31;border:1px solid #999;color:#fff;font-size:12px;line-height:17px;text-align:center;font-weight:bold}`,
 `<div class="row">${flow([
 [0,60,`<div class="start">${svg(20,20,'<path d="M0 3L8.500 1.700V9.500H0ZM9.500 1.500L20 0V9.500H9.500ZM0 10.500H8.500V18.300L0 17ZM9.500 10.500H20V20L9.500 18.500Z" fill="#fff"/>')}</div>`],
 [60,360,`<div class="search">${flow([ic(75,20,20,'<circle cx="12.500" cy="7.500" r="6.500" fill="none" stroke="#222" stroke-width="1.500"/><path d="M8 12L.5 19.500" stroke="#222" stroke-width="1.700"/>'),t(110,121,'Type to search','font-size:17px;color:#333'),ic(331,77,39,salad)],61)}</div>`],
 ic(440,21,19,'<g fill="none" stroke="#fff" stroke-width="1.400"><path d="M1 0V3H14V0M1 5.500H14V13.500H1ZM1 19V16H14V19M18.500 0V4M18.500 10V19"/></g><rect x="17" y="5.500" width="3" height="3" fill="#fff"/>'),
 [484,61,`<div class="app on">${svg(32,32,'<circle cx="15" cy="15" r="15" fill="#34a853"/><path d="M2 7.500A15 15 0 0 1 28 7.500L15 8 9 18Z" fill="#ea4335"/><path d="M28 7.500A15 15 0 0 1 14 30L21 18Q23 12 19 8Z" fill="#fbbc04"/><circle cx="15" cy="15" r="7" fill="#fff"/><circle cx="15" cy="15" r="5.500" fill="#4285f4"/><circle cx="22.500" cy="22.500" r="9.500" fill="#689f38"/><text x="20.500" y="27" fill="#e8f5d8" font-family="Open Sans" font-size="12">J</text>')}</div>`],
 [552,48,`<div class="app no">${svg(28,23,'<path d="M0 1H10L12 4H28V23H0Z" fill="#e8a91c"/><path d="M0 5H28V23H0Z" fill="#ffd667"/><path d="M4.500 23V13H23.500V23H18V18.500H10V23Z" fill="#3a96dd"/>')}</div>`],
 [613,50,`<div class="app">${svg(26,26,'<path d="M1 4L16 0V21L1 22Z" fill="#cfd3d6"/><path d="M6 2L26 4V18L7 16Z" fill="#e4ecf2" stroke="#aaa"/><path d="M8 11l3-1 2-4 3 7 3-5 2 3h4" fill="none" stroke="#2b8ac0" stroke-width="1.200"/><path d="M13 17h6v4q5 0 5 3-6 3-12 0 0-3 3-3Z" fill="#b4b8bb"/>')}</div>`],
 [675,50,`<div class="app">${svg(30,30,'<path d="M1 18Q-1 1 14 0 27 0 30 11 30 20 20 20 16 20 18 16 19 10 13 10 3 10 1 18Z" fill="#35c1b1"/><path d="M15 0Q28 1 30 11 30 20 20 20 16 20 18 16 20 8 10 8Q16 4 15 0Z" fill="#59d66b"/><path d="M1 13Q4 6 13 8 7 11 9 18 12 26 24 24 21 30 14 30 0 29 0 15Z" fill="#0c73cf"/><path d="M9 18Q12 26 27 22 22 30 14 29 6 26 9 18Z" fill="#0f4fa3"/>')}</div>`],
 [737,50,`<div class="app">${svg(30,30,'<g fill="none" stroke="#f0ae00" stroke-width="3.500"><path d="M2 12V2H11M2 2L9 9M19 2H28V11M28 2L17 12V16H4M28 19V28H19M28 28L22 22V8"/></g>')}</div>`],
 [799,50,`<div class="app">${svg(28,28,'<ellipse cx="14" cy="8" rx="11" ry="7.500" transform="rotate(-20 14 8)" fill="#f1e6e6" stroke="#d23b3b" stroke-width="2"/><path d="M7 14L19 3M12 16L22 7M5 9L16 2" stroke="#caa" stroke-width="1"/><path d="M3 13L14 18 18 10" fill="none" stroke="#bbb" stroke-width="3"/><path d="M15 16l2 5" stroke="#2a6fb5" stroke-width="2"/><circle cx="23" cy="19" r="3.500" fill="none" stroke="#3a8dd8" stroke-width="2"/><circle cx="17" cy="24" r="3.500" fill="none" stroke="#3a8dd8" stroke-width="2"/>')}</div>`],
 [861,50,`<div class="app">${svg(28,26,'<defs><linearGradient id="n" x2="1" y2="1"><stop stop-color="#c3e3ea"/><stop offset="1" stop-color="#4998ac"/></linearGradient></defs><path d="M8 1H25L27 22 24 25Z" fill="#e7e7e7"/><path d="M8 1H24L18 25H1Z" fill="url(#n)"/><path d="M8 1H24" stroke="#dde" stroke-width="2" stroke-dasharray="1 1"/>')}</div>`],
 [1419,30,svg(30,28,'<circle cx="14" cy="14" r="12.500" fill="#f6952c"/><path d="M2 11Q0 5 5 4 7-1 12 2q5 2 4 8Z" fill="#bcd3f2"/><circle cx="22" cy="20.500" r="7.500" fill="#0b63b5"/><path d="M20.500 18l2-1.500v8" stroke="#fff" stroke-width="1.300" fill="none"/>')],
 t(1459,37,'37°C',wt), t(1507,96,'Partly sunny',wt),
 ic(1634,16,9,'<path d="M1 8.500L8 1.500 15 8.500" fill="none" stroke="#fff" stroke-width="1.500"/>'),
 ic(1662,21,16,'<path d="M1 5.500H4L8 1.500V14.500L4 10.500H1Z" fill="none" stroke="#fff" stroke-width="1.200"/><path d="M11 5q2.500 3 0 6M14 3q4 5 0 10M17 1q5.500 7 0 14" fill="none" stroke="#fff" stroke-width="1.200"/>'),
 ic(1694,17,16,'<path d="M1 15Q1 2 15 1M5 15Q5 6 15 5M9 15Q9 10 15 9" fill="none" stroke="#fff" stroke-width="1.200"/><circle cx="14" cy="14" r="2" fill="#fff"/>'),
 t(1725,29,'ENG','font-size:14px;color:#fff'),
 [1770,76,'<div class="clk"><fit-text w="35" style="font-size:13.500px;color:#fff">08:50</fit-text><fit-text w="76" style="font-size:13.500px;color:#fff">02-06-2023</fit-text></div>'],
 [1869,30,`<div class="nt">${svg(20,20,'<path d="M0 0H20V15H15V20L10 15H0Z" fill="#fff"/><path d="M4 4H16M4 7.500H16M4 11H10" stroke="#222" stroke-width="1.300"/>')}<span class="bdg">2</span></div>`],
 ic(1914,1,50,'<path d="M.5 0V50" stroke="#777"/>')])}</div>`);

/* ---------- screen ---------- */
def('remote-desktop', `:host{width:1899px;height:881px;background:#303d4b;position:relative;overflow:hidden}
.w{display:flex;height:851px}vnc-handle{position:absolute;left:0;top:329px}`,
 `<div class="w"><file-manager></file-manager><rviz-window></rviz-window></div><lx-panel></lx-panel><vnc-handle></vnc-handle>`);
def('app-screen', `:host{display:flex;flex-direction:column;width:1920px;height:1080px;overflow:hidden}.v{display:flex}`,
 `<browser-tabs></browser-tabs><browser-toolbar></browser-toolbar><bookmark-bar></bookmark-bar>
 <div class="v"><remote-desktop></remote-desktop><v-scroll></v-scroll></div><h-scroll></h-scroll><win-taskbar></win-taskbar>`);
</script>
</body>
</html>
